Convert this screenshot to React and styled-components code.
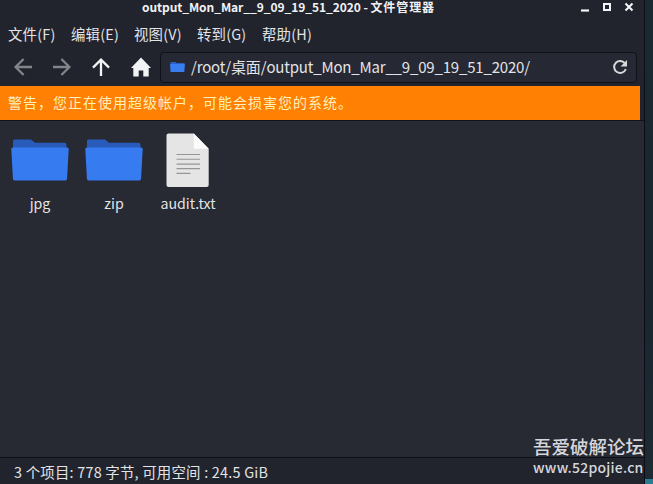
import React from "react";
import styled, { createGlobalStyle } from "styled-components";

const GlobalStyle = createGlobalStyle`
  * { box-sizing: border-box; }
  body {
    margin: 0;
    background: #1b2830;
    font-family: "Noto Sans CJK SC", sans-serif;
    color: #e3e4e6;
    overflow: hidden;
  }
`;

const Desktop = styled.div`
  position: relative;
  width: 653px;
  height: 484px;
  background: linear-gradient(#1b2a30, #1a2530 60%, #1d2b35);
`;

const Window = styled.main`
  display: flex;
  flex-direction: column;
  width: 645px;
  height: 484px;
  padding-right: 4px;
  background: #21232d;
  border-right: 1px solid #0c0e15;
`;

const TitleBar = styled.header`
  display: flex;
  align-items: center;
  flex: 0 0 16px;
  height: 16px;
  padding: 0 6px 2px 142px;
`;

const Title = styled.h1`
  flex: 1;
  margin: 0;
  font-size: 12px;
  line-height: 14px;
  font-weight: 700;
  color: #f0f1f3;
  white-space: nowrap;
  letter-spacing: -0.07px;
`;

const AppName = styled.span`
  letter-spacing: 0.9px;
`;

const Controls = styled.div`
  display: flex;
  gap: 12px;
`;

const MenuBar = styled.nav`
  display: flex;
  flex: 0 0 35px;
  align-items: center;
  padding-left: 8px;
`;

const MenuItem = styled.span`
  flex: 0 0 ${(p) => p.$width}px;
  font-size: 14.4px;
  line-height: 20px;
  white-space: nowrap;
  letter-spacing: 0.2px;
`;

const ToolBar = styled.div`
  display: flex;
  flex: 0 0 35px;
  align-items: center;
  padding: 0 3px 2px 13px;
`;

const NavButton = styled.span`
  display: flex;
  flex: 0 0 ${(p) => p.$width}px;
  margin-top: -2px;
  color: ${(p) => (p.$disabled ? "#83858b" : "#f2f3f4")};
`;

const PathField = styled.div`
  display: flex;
  flex: 1;
  align-items: center;
  height: 31px;
  padding: 0 8px 2px 9px;
  border: 1px solid #0f1118;
  border-radius: 4px;
  background: #262833;
`;

const PathText = styled.span`
  flex: 1;
  margin-left: 6px;
  font-size: 15px;
  line-height: 20px;
  white-space: nowrap;
  letter-spacing: -0.18px;
`;

const Warning = styled.div`
  flex: 0 0 34px;
  padding: 0 8px;
  background: #ff8002;
  color: #ffefbc;
  font-size: 14px;
  line-height: 32px;
  letter-spacing: 1px;
  white-space: nowrap;
`;

const Files = styled.section`
  display: flex;
  flex: 1;
  align-items: flex-start;
  margin-right: -4px;
  padding: 12px 0 0 3px;
  background: #272933;
  border-top: 1px solid #11131a;
`;

const FileItem = styled.div`
  display: flex;
  flex-direction: column;
  align-items: center;
  width: 74px;
`;

const FileLabel = styled.span`
  margin-top: 6px;
  font-size: 14.2px;
  line-height: 20px;
`;

const StatusBar = styled.footer`
  flex: 0 0 26px;
  margin-right: -4px;
  padding: 2px 0 0 14px;
  border-top: 1px solid #0d0f16;
  background: #21232d;
  font-size: 14.4px;
  line-height: 24px;
  white-space: pre;
  letter-spacing: 0.23px;
`;

const Watermark = styled.div`
  position: absolute;
  left: 533px;
  top: 435px;
  color: #d5d7dc;
  font-weight: 500;
  white-space: nowrap;
`;

const WatermarkName = styled.div`
  font-size: 18.5px;
  line-height: 22px;
`;

const WatermarkUrl = styled.div`
  font-size: 14px;
  line-height: 20px;
  letter-spacing: 0.22px;
`;

const DesktopAccent = styled.div`
  position: absolute;
  right: 0;
  bottom: 0;
  width: 8px;
  height: 5px;
  background: #2b7c90;
`;

const ArrowIcon = ({ angle = 0 }) => (
  <svg width="20" height="20" viewBox="0 0 20 20" fill="none" stroke="currentColor" strokeWidth="2.3">
    <g transform={`rotate(${angle} 10 10)`}>
      <path d="M19 10H3M10.6 2 2.6 10l8 8" />
    </g>
  </svg>
);

const HomeIcon = () => (
  <svg width="20" height="20" viewBox="0 0 20 20" fill="currentColor">
    <path d="M10 .5 0 11h2.3v8.5h5.4v-6h4.6v6h5.4V11H20z" />
  </svg>
);

const SmallFolder = () => (
  <svg width="15" height="12" viewBox="0 0 15 12">
    <path d="M.5 1h5l1.3 1H14q.7 0 .7.8V6H.2z" fill="#2b5fc0" />
    <path d="M.2 3h14.5l-.3 8H.5z" fill="#397eee" />
  </svg>
);

const FolderIcon = () => (
  <svg width="58" height="54" viewBox="0 0 58 54">
    <path d="M2 8q0-1.5 1.5-1.5H20l4 3.3h29.5q2 0 2 2V24H2z" fill="#295cba" />
    <path d="M.3 16q0-1.5 1.5-1.5h54.4q1.6 0 1.5 1.5l-1.6 29.5q-.1 2-2 2H3.8q-1.8 0-1.9-2z" fill="#367bef" />
  </svg>
);

const DocumentIcon = () => (
  <svg width="44" height="54" viewBox="0 0 44 54">
    <path d="M2.5.5h25.3L42.7 15.8V52q0 2-2 2H2.5q-2 0-2-2V2.5q0-2 2-2z" fill="#e5e5e5" />
    <path d="m27.8.5 14.9 15.3H29.3q-1.5 0-1.5-1.5z" fill="#fbfbfb" />
    <path d="M10.5 21.5H34M10.5 26.3H34M10.5 31.1H34M10.5 35.6H34M10.5 40.4h14" stroke="#969696" strokeWidth="1.1" />
  </svg>
);

const ReloadIcon = () => (
  <svg width="16" height="16" viewBox="0 0 16 16">
    <path d="M13.2 4.7A6 6 0 1 0 13.8 10" fill="none" stroke="#d7d8da" strokeWidth="2" />
    <path d="M15 1v6.4H8.6z" fill="#d7d8da" />
  </svg>
);

const MinimizeIcon = () => (
  <svg width="10" height="10" viewBox="0 0 10 10"><path d="M1 8.5h8" stroke="#f4f5f6" strokeWidth="2.2" /></svg>
);
const MaximizeIcon = () => (
  <svg width="10" height="10" viewBox="0 0 10 10"><path d="M2 2h6v6H2z" fill="none" stroke="#f4f5f6" strokeWidth="2" /></svg>
);
const CloseIcon = () => (
  <svg width="10" height="10" viewBox="0 0 10 10"><path d="m1.5 1.5 7 7m0-7-7 7" stroke="#f4f5f6" strokeWidth="2.1" /></svg>
);

const menus = [
  ["文件(F)", 63],
  ["编辑(E)", 63],
  ["视图(V)", 63],
  ["转到(G)", 65],
  ["帮助(H)", 60],
];

export default function App() {
  return (
    <Desktop>
      <GlobalStyle />
      <Window>
        <TitleBar>
          <Title>output_Mon_Mar__9_09_19_51_2020 - <AppName>文件管理器</AppName></Title>
          <Controls><MinimizeIcon /><MaximizeIcon /><CloseIcon /></Controls>
        </TitleBar>
        <MenuBar>
          {menus.map(([label, width]) => (
            <MenuItem key={label} $width={width}>{label}</MenuItem>
          ))}
        </MenuBar>
        <ToolBar>
          <NavButton $width={39} $disabled><ArrowIcon /></NavButton>
          <NavButton $width={39} $disabled><ArrowIcon angle={180} /></NavButton>
          <NavButton $width={40}><ArrowIcon angle={90} /></NavButton>
          <NavButton $width={29}><HomeIcon /></NavButton>
          <PathField>
            <SmallFolder />
            <PathText>/root/桌面/output_Mon_Mar__9_09_19_51_2020/</PathText>
            <ReloadIcon />
          </PathField>
        </ToolBar>
        <Warning>警告，您正在使用超级帐户，可能会损害您的系统。</Warning>
        <Files>
          <FileItem><FolderIcon /><FileLabel>jpg</FileLabel></FileItem>
          <FileItem><FolderIcon /><FileLabel>zip</FileLabel></FileItem>
          <FileItem><DocumentIcon /><FileLabel>audit.txt</FileLabel></FileItem>
        </Files>
        <StatusBar>3 个项目: 778 字节, 可用空间 : 24.5 GiB</StatusBar>
      </Window>
      <DesktopAccent />
      <Watermark>
        <WatermarkName>吾爱破解论坛</WatermarkName>
        <WatermarkUrl>www.52pojie.cn</WatermarkUrl>
      </Watermark>
    </Desktop>
  );
}
